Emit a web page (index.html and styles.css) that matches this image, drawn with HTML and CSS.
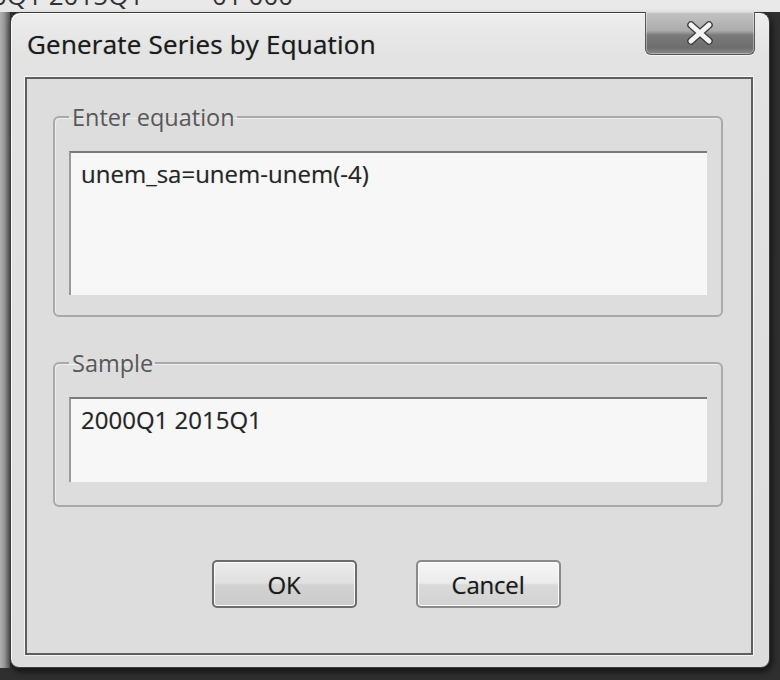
FILE: index.html
```html
<!DOCTYPE html>
<html lang="en">
<head>
    <meta charset="UTF-8">
    <title>Generate Series by Equation</title>
    <link rel="stylesheet" href="styles.css">
</head>
<body>
    <div class="behind">
        <span class="behind-date">0Q1 2015Q1</span>
        <span class="behind-num">01 000</span>
    </div>
    <div class="stage">
        <div class="edge-left"></div>
        <div class="window">
            <div class="titlebar">
                <div class="title">Generate Series by Equation</div>
                <button class="close" aria-label="Close">
                    <svg width="30" height="24" viewBox="0 0 30 24">
                        <path d="M6 4 L24 20 M24 4 L6 20" stroke="#3a3a3a" stroke-width="7.5" stroke-linecap="round"/>
                        <path d="M6 4 L24 20 M24 4 L6 20" stroke="#f4f4f4" stroke-width="5" stroke-linecap="round"/>
                    </svg>
                </button>
            </div>
            <div class="client">
                <fieldset class="group">
                    <legend>Enter equation</legend>
                    <div class="textbox tall">unem_sa=unem-unem(-4)</div>
                </fieldset>
                <fieldset class="group group-sample">
                    <legend>Sample</legend>
                    <div class="textbox short">2000Q1 2015Q1</div>
                </fieldset>
                <div class="actions">
                    <button class="btn btn-default">OK</button>
                    <button class="btn">Cancel</button>
                </div>
            </div>
        </div>
    </div>
</body>
</html>
```

FILE: styles.css
```css
body {
    margin: 0;
    width: 780px;
    height: 680px;
    overflow: hidden;
    background: #2f2f2f;
    font-family: "Open Sans", "Noto Sans", sans-serif;
}

/* bits of the window underneath */
.behind {
    height: 12px;
    overflow: hidden;
    background: #e9e9e9;
    color: #333;
    font-size: 26px;
    line-height: 12px;
    white-space: nowrap;
}

.behind span {
    display: inline-block;
    transform: translateY(-11px);
}

.behind-date {
    margin-left: -8px;
}

.behind-num {
    margin-left: 62px;
}

.stage {
    display: flex;
}

.edge-left {
    width: 10px;
    height: 656px;
    background: linear-gradient(to right, #b0b0b0, #9a9a9a 40%, #555555);
}

.window {
    width: 758px;
    height: 654px;
    border: 1px solid #3c3c3c;
    border-radius: 10px 10px 9px 9px;
    background: linear-gradient(to bottom, #ededed, #e3e3e3 40px, #dcdcdc);
    box-shadow: inset 1px 1px 0 #fafafa, 2px 4px 6px rgba(0, 0, 0, 0.6);
    display: flex;
    flex-direction: column;
}

.titlebar {
    height: 64px;
    display: flex;
    justify-content: space-between;
    align-items: flex-start;
    padding: 0 14px 0 16px;
}

.title {
    font-size: 26px;
    color: #1a1a1a;
    letter-spacing: 0.2px;
    margin-top: 13px;
    text-shadow: 0 0 1px rgba(0, 0, 0, 0.45);
}

.close {
    width: 110px;
    height: 43px;
    margin-top: -1px;
    border: 1px solid #5a5a5a;
    border-top: none;
    border-radius: 0 0 6px 6px;
    background: linear-gradient(to bottom, #c4c4c4, #aaaaaa 45%, #7a7a7a 55%, #6e6e6e 85%, #8a8a8a);
    box-shadow: inset 0 0 0 1px rgba(255, 255, 255, 0.35), 0 1px 0 #f4f4f4;
    display: flex;
    align-items: center;
    justify-content: center;
    padding: 0;
}

.client {
    flex: 1;
    margin: 0 16px 12px 14px;
    border: 2px solid #5e5e5e;
    background: #dddddd;
    box-shadow: 0 0 0 1px #f6f6f6;
    padding: 25px 28px 0 26px;
}

.group {
    margin: 0;
    border: 2px solid #a9a9a9;
    border-radius: 6px;
    padding: 21px 14px 20px;
    box-shadow: inset 1px 1px 0 #eeeeee;
}

.group-sample {
    margin-top: 33px;
    padding-bottom: 23px;
}

.group legend {
    font-size: 23.5px;
    line-height: 26px;
    color: #585858;
    padding: 0 2px 0 3px;
}

.textbox {
    border-top: 2px solid #7a7a7a;
    border-left: 2px solid #9a9a9a;
    background: #f7f7f7;
    padding: 4px 10px 12px;
    font-size: 24px;
    color: #262626;
    text-shadow: 0 0 1px rgba(0, 0, 0, 0.3);
}

.tall {
    height: 126px;
}

.short {
    height: 67px;
}

.actions {
    display: flex;
    justify-content: center;
    gap: 59px;
    margin-top: 53px;
    padding-right: 4px;
}

.btn {
    width: 145px;
    height: 48px;
    border: 2px solid #8a8a8a;
    border-radius: 5px;
    background: linear-gradient(to bottom, #f6f6f6, #ebebeb 48%, #dadada 52%, #d2d2d2);
    box-shadow: inset 0 0 0 1px #fbfbfb;
    font-family: "Open Sans", "Noto Sans", sans-serif;
    font-size: 24px;
    color: #1a1a1a;
    letter-spacing: -0.2px;
    text-shadow: 0 0 1px rgba(0, 0, 0, 0.35);
}

.btn-default {
    border-color: #6c6c6c;
    background: linear-gradient(to bottom, #ececec, #e0e0e0 48%, #d2d2d2 52%, #cbcbcb);
}
```
